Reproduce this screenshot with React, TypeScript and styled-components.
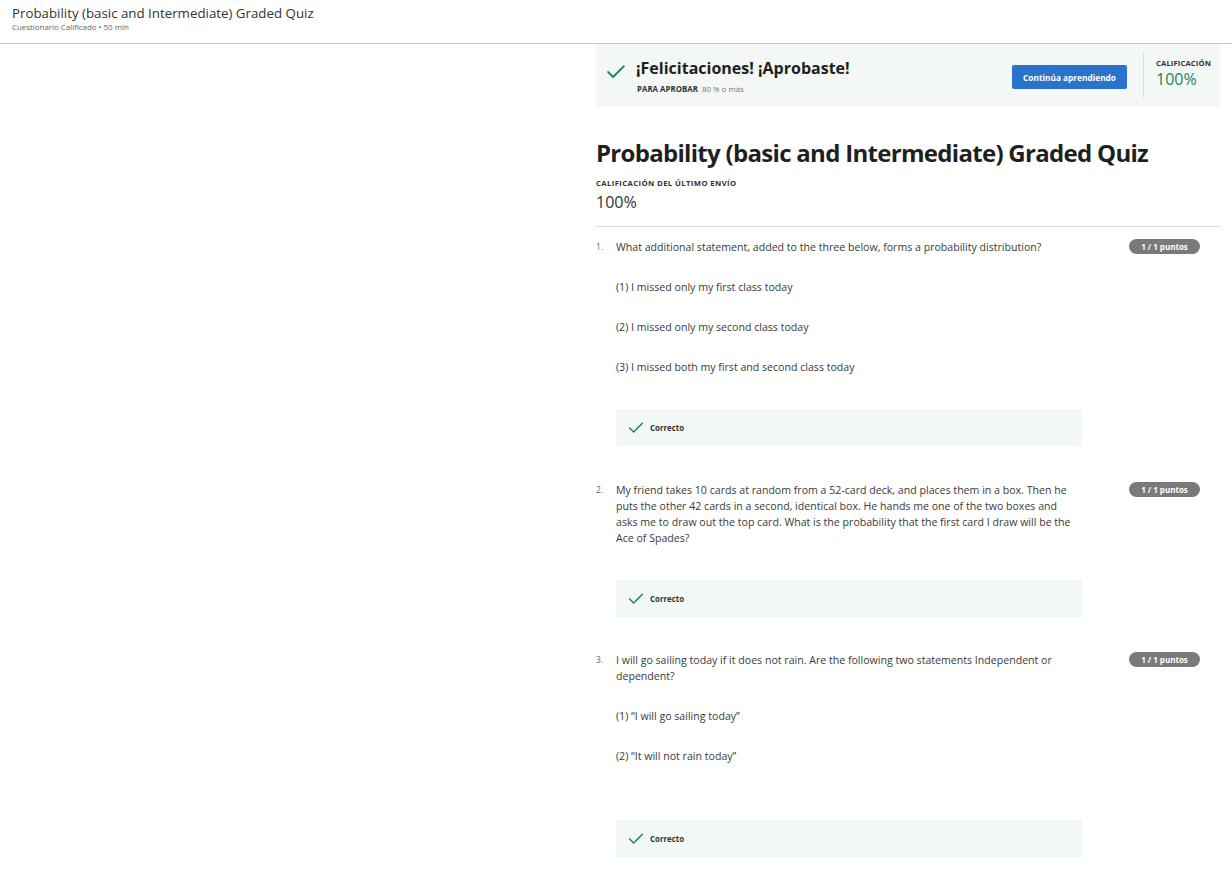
import React from "react";
import styled, { createGlobalStyle } from "styled-components";

const Global = createGlobalStyle`
  html, body { margin: 0; padding: 0; background: #fff; }
  body { font-family: "Open Sans", "Noto Sans", sans-serif; color: #1f1f1f; }
`;

const Page = styled.div`
  width: 1232px;
  min-height: 877px;
  background: #fff;
`;

const Header = styled.header`
  height: 44px;
  border-bottom: 1px solid #c4c4c4;
  padding: 5px 0 0 12px;
  box-sizing: border-box;
`;

const HeaderTitle = styled.div`
  font-size: 13.3px;
  line-height: 17px;
  color: #333;
`;

const HeaderSub = styled.div`
  font-size: 7.9px;
  line-height: 10px;
  color: #666;
`;

const Main = styled.main`
  display: flex;
  justify-content: flex-end;
  padding-right: 12px;
`;

const Column = styled.div`
  width: 624px;
`;

const Banner = styled.section`
  height: 63px;
  background: #f3f8f6;
  display: flex;
  align-items: flex-start;
  padding-left: 10px;
  box-sizing: border-box;
`;

const CheckSlot = styled.div`
  margin-top: 18px;
  display: flex;
`;

const BannerText = styled.div`
  flex: 1;
  margin: 13px 0 0 10px;
`;

const BannerTitle = styled.div`
  font-size: 16px;
  font-weight: 700;
  line-height: 22px;
  color: #1f1f1f;
`;

const Requirement = styled.div`
  font-size: 7.9px;
  line-height: 10px;
  color: #777;
  margin-top: 5px;
  margin-left: 1px;
  b { color: #333; margin-right: 4px; }
`;

const PrimaryButton = styled.button`
  width: 115px;
  height: 24px;
  margin-top: 21px;
  margin-right: 16px;
  border: none;
  border-radius: 2px;
  background: #2a73cc;
  color: #fff;
  font-family: inherit;
  font-size: 8.3px;
  font-weight: 700;
  cursor: pointer;
`;

const Divider = styled.div`
  width: 1px;
  height: 46px;
  margin: 8px 12px 0 0;
  background: #dedede;
`;

const GradeBlock = styled.div`
  width: 64px;
  margin-top: 14px;
`;

const SmallCaps = styled.div<{ $spacing?: number }>`
  font-size: 7.7px;
  font-weight: 700;
  line-height: 10px;
  color: #333;
  letter-spacing: ${(p) => p.$spacing ?? 0.1}px;
`;

const GreenScore = styled.div`
  font-size: 16px;
  line-height: 20px;
  color: #1f8354;
  margin-top: 1px;
`;

const Title = styled.h1`
  margin: 30px 0 0;
  font-size: 24px;
  font-weight: 700;
  line-height: 32px;
  color: #1f1f1f;
  letter-spacing: -0.7px;
`;

const LastGrade = styled.div`
  margin-top: 9px;
`;

const Score = styled.div`
  font-size: 16px;
  line-height: 20px;
  color: #333;
  margin-top: 4px;
`;

const Rule = styled.hr`
  border: none;
  border-top: 1px solid #dcdcdc;
  margin: 14px 0 0;
`;

const Question = styled.section<{ $gap: number }>`
  margin-top: ${(p) => p.$gap}px;
  display: grid;
  grid-template-columns: 20px 1fr 100px;
`;

const Num = styled.div`
  font-size: 8.5px;
  line-height: 15px;
  color: #666;
`;

const QBody = styled.div`
  font-size: 10.6px;
  line-height: 16px;
  color: #3a3a3a;
`;

const Prompt = styled.p`
  margin: 0;
  max-width: 462px;
`;

const Option = styled.p<{ $top: number }>`
  margin: ${(p) => p.$top}px 0 0;
`;

const Badge = styled.div`
  justify-self: end;
  margin-right: 20px;
  margin-top: 0;
  width: 71px;
  height: 15px;
  border-radius: 8px;
  background: #7a7a7a;
  color: #fff;
  font-size: 8px;
  font-weight: 700;
  line-height: 15px;
  text-align: center;
`;

const Feedback = styled.div<{ $top: number }>`
  margin-top: ${(p) => p.$top}px;
  width: 466px;
  height: 37px;
  background: #f2f8f6;
  display: flex;
  align-items: center;
  padding-left: 12px;
  box-sizing: border-box;
  font-size: 7.9px;
  font-weight: 700;
  color: #333;
  gap: 6px;
`;

const Check = ({ size }: { size: number }) => (
  <svg width={size} height={size} viewBox="0 0 24 24" fill="none">
    <path d="M2.5 12 L8.5 18 L21.5 5" stroke="#1f8354" strokeWidth={2.2} strokeLinecap="round" strokeLinejoin="round" />
  </svg>
);

type Q = { n: number; prompt: string; options: string[]; gap: number; fbTop: number };

const questions: Q[] = [
  {
    n: 1,
    prompt: "What additional statement, added to the three below, forms a probability distribution?",
    options: ["(1) I missed only my first class today", "(2) I missed only my second class today", "(3) I missed both my first and second class today"],
    gap: 12,
    fbTop: 34,
  },
  {
    n: 2,
    prompt: "My friend takes 10 cards at random from a 52-card deck, and places them in a box. Then he puts the other 42 cards in a second, identical box. He hands me one of the two boxes and asks me to draw out the top card. What is the probability that the first card I draw will be the Ace of Spades?",
    options: [],
    gap: 36,
    fbTop: 34,
  },
  {
    n: 3,
    prompt: "I will go sailing today if it does not rain. Are the following two statements Independent or dependent?",
    options: ["(1) \u201cI will go sailing today\u201d", "(2) \u201cIt will not rain today\u201d"],
    gap: 35,
    fbTop: 56,
  },
];

export default function App() {
  return (
    <Page>
      <Global />
      <Header>
        <HeaderTitle>Probability (basic and Intermediate) Graded Quiz</HeaderTitle>
        <HeaderSub>Cuestionario Calificado • 50 min</HeaderSub>
      </Header>
      <Main>
        <Column>
          <Banner>
            <CheckSlot>
              <Check size={20} />
            </CheckSlot>
            <BannerText>
              <BannerTitle>¡Felicitaciones! ¡Aprobaste!</BannerTitle>
              <Requirement>
                <b>PARA APROBAR</b>80 % o más
              </Requirement>
            </BannerText>
            <PrimaryButton>Continúa aprendiendo</PrimaryButton>
            <Divider />
            <GradeBlock>
              <SmallCaps>CALIFICACIÓN</SmallCaps>
              <GreenScore>100%</GreenScore>
            </GradeBlock>
          </Banner>
          <Title>Probability (basic and Intermediate) Graded Quiz</Title>
          <LastGrade>
            <SmallCaps $spacing={0.4}>CALIFICACIÓN DEL ÚLTIMO ENVÍO</SmallCaps>
            <Score>100%</Score>
          </LastGrade>
          <Rule />
          {questions.map((q) => (
            <Question key={q.n} $gap={q.gap}>
              <Num>{q.n}.</Num>
              <QBody>
                <Prompt>{q.prompt}</Prompt>
                {q.options.map((o) => (
                  <Option key={o} $top={24}>{o}</Option>
                ))}
                <Feedback $top={q.fbTop}>
                  <Check size={16} />
                  Correcto
                </Feedback>
              </QBody>
              <Badge>1 / 1 puntos</Badge>
            </Question>
          ))}
        </Column>
      </Main>
    </Page>
  );
}
